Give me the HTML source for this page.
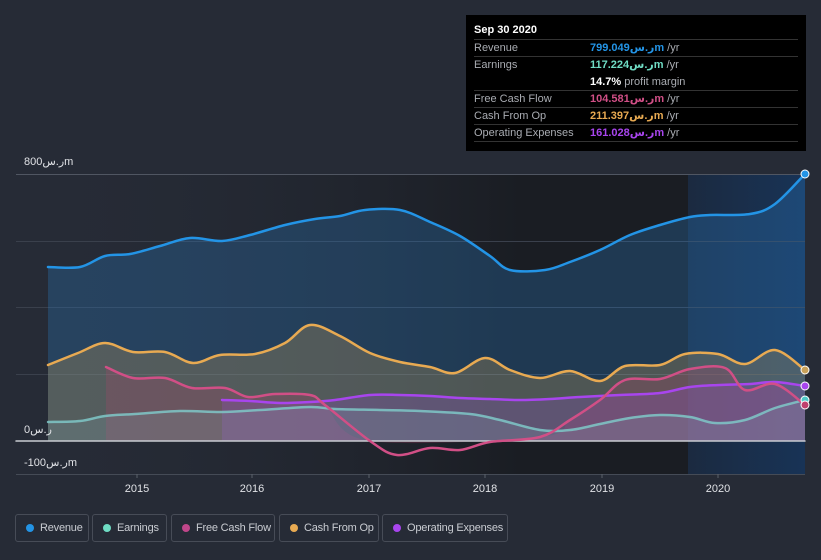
<!DOCTYPE html>
<html><head><meta charset="utf-8"><style>
*{margin:0;padding:0;box-sizing:border-box}
body{width:821px;height:560px;background:#262b36;font-family:"Liberation Sans","DejaVu Sans",sans-serif;position:relative;overflow:hidden;color:#c9ccd2}
svg{position:absolute;left:0;top:0}
.tt{position:absolute;left:466px;top:15px;width:340px;height:136px;background:#000;padding:8px 8px 0 8px;font-size:11px}
.tt .h{color:#fff;font-weight:bold;font-size:11px;height:17px;border-bottom:1px solid #333;line-height:15px}
.row{height:17px;border-bottom:1px solid #333;display:flex;line-height:16px;color:#a9acb2}
.row.nb{border-bottom:none}
.row .l{width:116px}
.row b{font-weight:bold}
.leg{position:absolute;top:514px;height:28px;border:1px solid #474c57;border-radius:3px;font-size:11px;color:#c9ccd2;line-height:26px;padding-left:24px;white-space:nowrap;letter-spacing:-0.2px}
.leg i{position:absolute;left:10px;top:9px;width:8px;height:8px;border-radius:50%}
.ax{position:absolute;font-size:11px;color:#e0e2e6}
</style></head><body>
<svg width="821" height="560">
<defs>
<linearGradient id="bg" x1="0" x2="1" y1="0" y2="0"><stop offset="0" stop-color="#262b36" stop-opacity="0"/><stop offset="0.75" stop-color="#1a1d23" stop-opacity="1"/></linearGradient>
<linearGradient id="hl" x1="0" x2="1"><stop offset="0" stop-color="#1b2a40"/><stop offset="1" stop-color="#183356"/></linearGradient>
</defs>
<rect x="16" y="174" width="672" height="300" fill="url(#bg)"/>
<rect x="688" y="174" width="117" height="300" fill="url(#hl)"/>
<g stroke="#3a404c" stroke-width="1">
<line x1="16" y1="174.5" x2="805" y2="174.5" stroke="#505662"/>
<line x1="16" y1="241.5" x2="805" y2="241.5"/>
<line x1="16" y1="307.5" x2="805" y2="307.5"/>
<line x1="16" y1="374.5" x2="805" y2="374.5"/>
<line x1="16" y1="474.5" x2="805" y2="474.5" stroke="#454b56"/>
</g>
<g stroke-linejoin="round" stroke-linecap="round" stroke-width="2.5" id="cg">
<polygon class="s" fill="#2a7cc0" fill-opacity="0.3" points="48,441 48,267 80,267 105,256 130,254 160,246 190,238 222,241 250,235 285,225 315,219 340,216 365,210 400,210 430,222 460,236 490,256 510,270 545,270 570,262 600,250 630,235 660,225 690,217 710,215 750,214 775,204 805,174 805,441"/>
<polygon class="s" fill="#c8a15a" fill-opacity="0.28" points="48,441 48,365 78,353 105,343 133,352 165,352 193,363 220,355 255,354 285,343 310,325 340,336 370,353 400,362 430,367 455,373 485,358 510,370 540,378 570,371 600,381 625,366 660,365 685,354 718,354 745,364 775,350 805,370 805,441"/>
<polygon class="s" fill="#c0406e" fill-opacity="0.22" points="106,441 106,367 133,378 165,378 192,388 225,388 248,397 275,394 310,395 325,405 370,441 540,437 570,420 600,400 625,380 660,379 690,369 725,368 745,390 775,384 805,405 805,441"/>
<polygon class="s" fill="#9b4fe0" fill-opacity="0.22" points="222,441 222,400 250,401 280,403 310,402 335,400 370,395 400,395 430,396 460,398 490,399 520,400 550,399 580,397 620,395 660,393 690,387 720,385 750,384 775,382 805,386 805,441"/>
<polygon class="s" fill="#8fb8c0" fill-opacity="0.18" points="48,441 48,422 80,421 105,416 135,414 180,411 222,412 260,410 310,407 335,409 380,410 420,411 470,414 500,420 540,430 570,430 600,424 630,418 660,415 690,417 715,423 745,420 775,408 805,400 805,441"/>
<line x1="16" y1="441" x2="805" y2="441" stroke="#c9ccd2" stroke-width="1.5"/>
<polyline class="s" fill="none" stroke="#7fc8c8" stroke-opacity="0.85" points="48,422 80,421 105,416 135,414 180,411 222,412 260,410 310,407 335,409 380,410 420,411 470,414 500,420 540,430 570,430 600,424 630,418 660,415 690,417 715,423 745,420 775,408 805,400"/>
<polyline class="s" fill="none" stroke="#a845ee" points="222,400 250,401 280,403 310,402 335,400 370,395 400,395 430,396 460,398 490,399 520,400 550,399 580,397 620,395 660,393 690,387 720,385 750,384 775,382 805,386"/>
<polyline class="s" fill="none" stroke="#d14f86" points="106,367 133,378 165,378 192,388 225,388 248,397 275,394 310,395 325,405 370,441 397,455 430,448 460,450 490,442 540,437 570,420 600,400 625,380 660,379 690,369 725,368 745,390 775,384 805,405"/>
<polyline class="s" fill="none" stroke="#e8aa52" points="48,365 78,353 105,343 133,352 165,352 193,363 220,355 255,354 285,343 310,325 340,336 370,353 400,362 430,367 455,373 485,358 510,370 540,378 570,371 600,381 625,366 660,365 685,354 718,354 745,364 775,350 805,370"/>
<polyline class="s" fill="none" stroke="#2394e6" points="48,267 80,267 105,256 130,254 160,246 190,238 222,241 250,235 285,225 315,219 340,216 365,210 400,210 430,222 460,236 490,256 510,270 545,270 570,262 600,250 630,235 660,225 690,217 710,215 750,214 775,204 805,174"/>
</g>
<g stroke="#fff" stroke-width="1">
<circle cx="805" cy="174" r="4" fill="#2394e6"/>
<circle cx="805" cy="370" r="4" fill="#c8a15a"/>
<circle cx="805" cy="386" r="4" fill="#a845ee"/>
<circle cx="805" cy="400" r="4" fill="#4fc8c8"/>
<circle cx="805" cy="405" r="4" fill="#c0406e"/>
</g>
<g stroke="#5a606b"><line x1="137" y1="474" x2="137" y2="478"/><line x1="252" y1="474" x2="252" y2="478"/><line x1="369" y1="474" x2="369" y2="478"/><line x1="485" y1="474" x2="485" y2="478"/><line x1="602" y1="474" x2="602" y2="478"/><line x1="718" y1="474" x2="718" y2="478"/></g>
<g font-size="11" fill="#e0e2e6" text-anchor="middle" font-family="Liberation Sans, sans-serif">
<text x="137" y="492">2015</text><text x="252" y="492">2016</text><text x="369" y="492">2017</text><text x="485" y="492">2018</text><text x="602" y="492">2019</text><text x="718" y="492">2020</text>
</g>
</svg>
<div class="ax" style="left:24px;top:155px">800ر.سm</div>
<div class="ax" style="left:24px;top:423px">0ر.س</div>
<div class="ax" style="left:24px;top:456px">-100ر.سm</div>
<div class="tt">
<div class="h">Sep 30 2020</div>
<div class="row"><span class="l">Revenue</span><span><b style="color:#2394e6">799.049ر.سm</b> /yr</span></div>
<div class="row nb"><span class="l">Earnings</span><span><b style="color:#6fdcc4">117.224ر.سm</b> /yr</span></div>
<div class="row"><span class="l"></span><span><b style="color:#fff">14.7%</b> profit margin</span></div>
<div class="row"><span class="l">Free Cash Flow</span><span><b style="color:#d14f86">104.581ر.سm</b> /yr</span></div>
<div class="row"><span class="l">Cash From Op</span><span><b style="color:#e8aa52">211.397ر.سm</b> /yr</span></div>
<div class="row"><span class="l">Operating Expenses</span><span><b style="color:#a845ee">161.028ر.سm</b> /yr</span></div>
</div>
<div class="leg" style="left:15px;width:74px"><i style="background:#2394e6"></i>Revenue</div>
<div class="leg" style="left:92px;width:75px"><i style="background:#6fdcc4"></i>Earnings</div>
<div class="leg" style="left:171px;width:104px"><i style="background:#c0468a"></i>Free Cash Flow</div>
<div class="leg" style="left:279px;width:100px"><i style="background:#e8aa52"></i>Cash From Op</div>
<div class="leg" style="left:382px;width:126px"><i style="background:#a845ee"></i>Operating Expenses</div>
<script>
(function(){
var els=document.querySelectorAll('#cg .s');
els.forEach(function(el){
 var pts=el.getAttribute('points').trim().split(/\s+/).map(function(p){return p.split(',').map(Number)});
 var poly=el.tagName.toLowerCase()==='polygon';
 var core=poly?pts.slice(1,pts.length-1):pts;
 var d='';
 if(poly) d='M'+pts[0][0]+','+pts[0][1]+' L'+core[0][0]+','+core[0][1];
 else d='M'+core[0][0]+','+core[0][1];
 for(var i=0;i<core.length-1;i++){
  var p0=core[i-1]||core[i],p1=core[i],p2=core[i+1],p3=core[i+2]||p2;
  var c1x=p1[0]+(p2[0]-p0[0])/6,c1y=p1[1]+(p2[1]-p0[1])/6;
  var c2x=p2[0]-(p3[0]-p1[0])/6,c2y=p2[1]-(p3[1]-p1[1])/6;
  d+=' C'+c1x+','+c1y+' '+c2x+','+c2y+' '+p2[0]+','+p2[1];
 }
 if(poly) d+=' L'+pts[pts.length-1][0]+','+pts[pts.length-1][1]+' Z';
 var p=document.createElementNS('http://www.w3.org/2000/svg','path');
 for(var k=0;k<el.attributes.length;k++){var a=el.attributes[k];if(a.name!=='points'&&a.name!=='class')p.setAttribute(a.name,a.value);}
 if(!poly)p.setAttribute('fill','none');
 p.setAttribute('d',d);
 el.parentNode.replaceChild(p,el);
});
})();
</script>
</body></html>
